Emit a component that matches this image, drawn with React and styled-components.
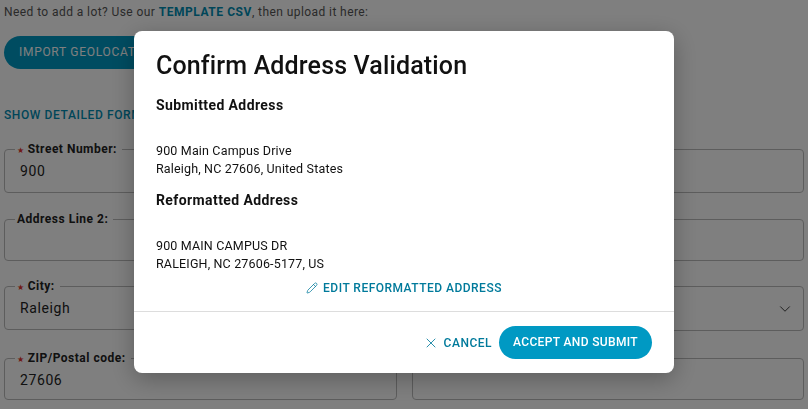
import styled, { createGlobalStyle } from 'styled-components';
import { X, Pencil, ChevronDown } from 'lucide-react';

const fontStack = 'Roboto, "Noto Sans", sans-serif';

const GlobalStyle = createGlobalStyle`
	html, body {
		margin: 0;
		height: 100%;
		overflow: hidden;
		background: #fff;
		font-family: ${fontStack};
		color: #333;
	}
`;

const Page = styled.div`
	padding: 5px 4px 0;
	height: 404px;
	overflow: hidden;
`;
const Intro = styled.p`
	margin: 0;
	font-size: 12px;
	line-height: 14px;
	color: #555;
	letter-spacing: 0.42px;
	a {
		color: #008db3;
		font-weight: 700;
		letter-spacing: 0.55px;
	}
`;
const ImportButton = styled.div`
	margin-top: 17px;
	width: 190px;
	height: 33px;
	border-radius: 17px;
	background: #0099c3;
	color: #fff;
	font-size: 12px;
	line-height: 33px;
	padding-left: 15px;
	letter-spacing: 0.7px;
	box-sizing: border-box;
`;
const DetailsToggle = styled.div`
	margin-top: 39px;
	font-size: 12px;
	line-height: 14px;
	font-weight: 500;
	color: #008db3;
	letter-spacing: 0.6px;
`;
const FormGrid = styled.div`
	display: grid;
	grid-template-columns: 393px 392px;
	column-gap: 15px;
	margin-top: 20px;
`;
const Field = styled.fieldset`
	margin: 0 0 ${(p) => p.$gap}px;
	padding: 0 15px;
	height: ${(p) => p.$height}px;
	box-sizing: border-box;
	border: 1px solid #bbb;
	border-radius: 4px;
	min-width: 0;
	position: relative;
`;
const FieldLabel = styled.legend`
	padding: ${(p) => (p.$empty ? '0' : '0 5px 0 2px')};
	margin-left: -5px;
	width: ${(p) => (p.$empty ? '0' : 'auto')};
	height: 14px;
	overflow: hidden;
	font-size: 12px;
	line-height: 14px;
	font-weight: 700;
	color: #222;
	letter-spacing: 0.5px;
	i {
		font-family: "DejaVu Sans", sans-serif;
		font-style: normal;
		font-size: 8px;
		color: #e0352b;
		margin-right: 3px;
		vertical-align: 0;
	}
`;
const FieldValue = styled.div`
	margin-top: 5px;
	font-size: 14px;
	line-height: 20px;
	color: #222;
	letter-spacing: 0.6px;
`;
const SelectArrow = styled.span`
	position: absolute;
	right: 9px;
	top: 7px;
	display: flex;
	color: #333;
`;
const Overlay = styled.div`
	position: fixed;
	inset: 0;
	background: rgba(0, 0, 0, 0.5);
	display: flex;
	align-items: flex-start;
	justify-content: center;
	padding-top: 31px;
`;
const Modal = styled.div`
	width: 540px;
	height: 342px;
	background: #fff;
	border-radius: 8px;
	box-shadow: 0 6px 24px rgba(0, 0, 0, 0.28);
	display: flex;
	flex-direction: column;
	color: #111;
`;
const ModalBody = styled.div`
	padding: 19px 22px 0;
	height: 281px;
	box-sizing: border-box;
	border-bottom: 1px solid #ddd;
`;
const Title = styled.h2`
	margin: 0;
	font-size: 25px;
	line-height: 32px;
	font-weight: 500;
	letter-spacing: 0.15px;
`;
const SectionTitle = styled.h3`
	margin: ${(p) => p.$top}px 0 0;
	font-size: 14px;
	line-height: 18px;
	font-weight: 700;
	letter-spacing: 0.4px;
`;
const AddressText = styled.p`
	margin: 28px 0 0;
	font-size: 12.5px;
	line-height: 18px;
	letter-spacing: 0.16px;
`;
const EditLink = styled.div`
	margin-top: 7px;
	display: flex;
	align-items: center;
	justify-content: center;
	gap: 5px;
	font-size: 12px;
	line-height: 16px;
	font-weight: 500;
	color: #007a9b;
	letter-spacing: 0.48px;
`;
const ModalFooter = styled.div`
	display: flex;
	justify-content: flex-end;
	align-items: center;
	gap: 7px;
	padding: 14px 22px 0;
`;
const CancelButton = styled.div`
	display: flex;
	align-items: center;
	gap: 5px;
	font-size: 12px;
	font-weight: 500;
	color: #007a9b;
	letter-spacing: 0.5px;
`;
const SubmitButton = styled.div`
	width: 153px;
	height: 33px;
	border-radius: 17px;
	background: #0099c3;
	color: #fff;
	font-size: 12px;
	font-weight: 500;
	line-height: 33px;
	text-align: center;
	letter-spacing: 0.35px;
`;

const fields = [
	{ label: 'Street Number:', required: true, value: '900', height: 51, gap: 19 },
	{ height: 51, gap: 19 },
	{ label: 'Address Line 2:', height: 49, gap: 18 },
	{ height: 49, gap: 18 },
	{ label: 'City:', required: true, value: 'Raleigh', height: 51, gap: 21 },
	{ arrow: true, height: 52, gap: 20 },
	{ label: 'ZIP/Postal code:', required: true, value: '27606', height: 49, gap: 0 },
	{ height: 49, gap: 0 },
];

const App = () => (
	<>
		<GlobalStyle />
		<Page>
			<Intro>
				Need to add a lot? Use our <a>TEMPLATE CSV</a>, then upload it here:
			</Intro>
			<ImportButton>IMPORT GEOLOCATIONS</ImportButton>
			<DetailsToggle>SHOW DETAILED FORM</DetailsToggle>
			<FormGrid>
				{fields.map(({ label, required, value, arrow, height, gap }, i) => (
					<Field key={i} $height={height} $gap={gap}>
						<FieldLabel $empty={!label}>
							{required && <i>★</i>}
							{label || '\u00a0'}
						</FieldLabel>
						{value && <FieldValue>{value}</FieldValue>}
						{arrow && (
							<SelectArrow>
								<ChevronDown size={18} strokeWidth={1.25} />
							</SelectArrow>
						)}
					</Field>
				))}
			</FormGrid>
		</Page>
		<Overlay>
			<Modal>
				<ModalBody>
					<Title>Confirm Address Validation</Title>
					<SectionTitle $top={14}>Submitted Address</SectionTitle>
					<AddressText>
						900 Main Campus Drive
						<br />
						Raleigh, NC 27606, United States
					</AddressText>
					<SectionTitle $top={13}>Reformatted Address</SectionTitle>
					<AddressText>
						900 MAIN CAMPUS DR
						<br />
						RALEIGH, NC 27606-5177, US
					</AddressText>
					<EditLink>
						<Pencil size={12} strokeWidth={1.5} />
						EDIT REFORMATTED ADDRESS
					</EditLink>
				</ModalBody>
				<ModalFooter>
					<CancelButton>
						<X size={16} strokeWidth={1.25} />
						CANCEL
					</CancelButton>
					<SubmitButton>ACCEPT AND SUBMIT</SubmitButton>
				</ModalFooter>
			</Modal>
		</Overlay>
	</>
);

export default App;
